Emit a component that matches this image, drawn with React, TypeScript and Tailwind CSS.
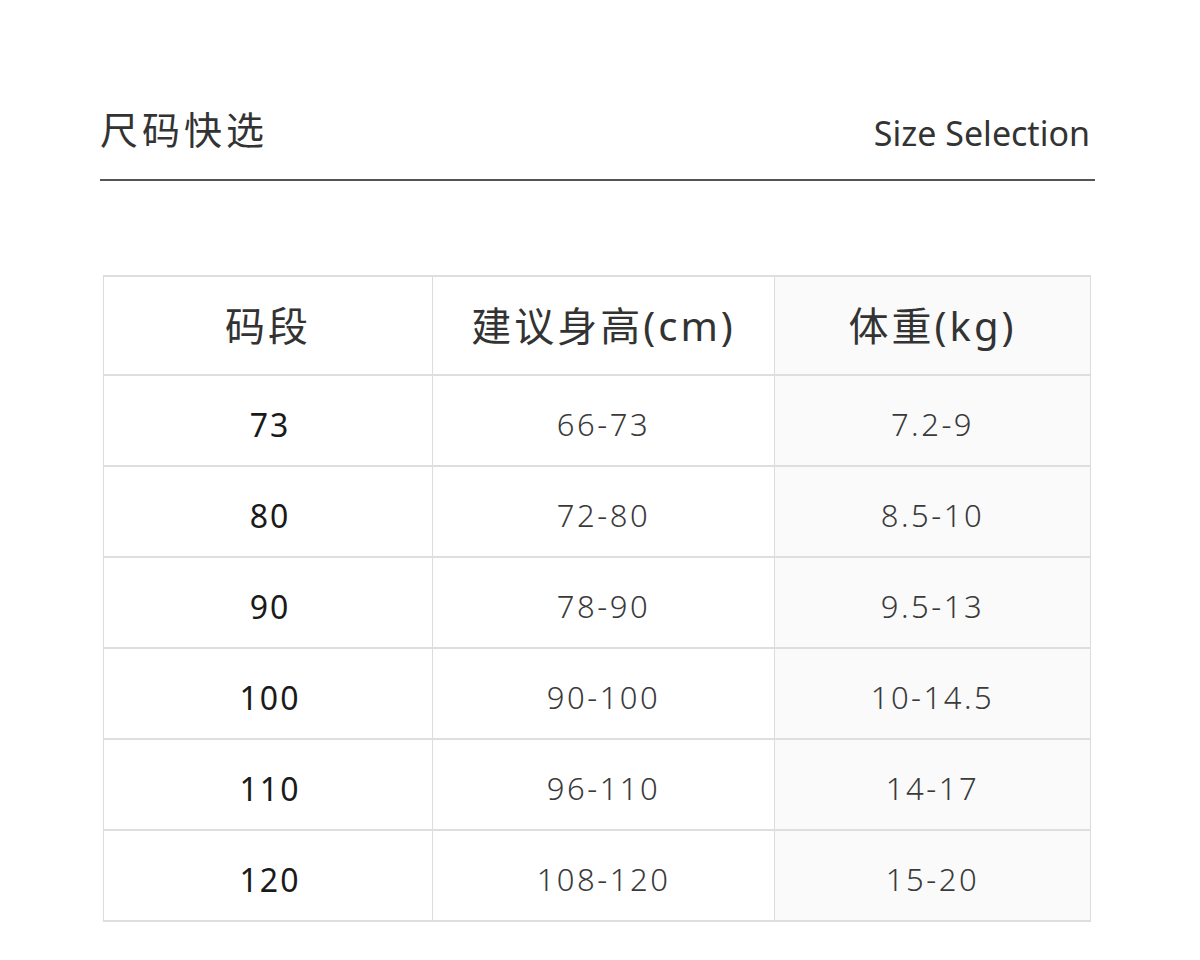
import React from 'react';

const rows = [
  { size: '73', height: '66-73', weight: '7.2-9' },
  { size: '80', height: '72-80', weight: '8.5-10' },
  { size: '90', height: '78-90', weight: '9.5-13' },
  { size: '100', height: '90-100', weight: '10-14.5' },
  { size: '110', height: '96-110', weight: '14-17' },
  { size: '120', height: '108-120', weight: '15-20' },
];

const font = { fontFamily: '"Noto Sans", "Noto Sans CJK SC", sans-serif' };

export default function App() {
  return (
    <div className="w-[1200px] h-[960px] bg-white text-[#333]" style={font}>
      {/* Title bar */}
      <div className="ml-[100px] w-[995px] pt-[105px]">
        <div className="flex items-end justify-between pr-[5px] pb-[25px] border-b-2 border-[#555]">
          <h1 className="text-[38px] leading-[48px] tracking-[4px] text-[#333] mb-[1px]">尺码快选</h1>
          <span className="text-[34px] leading-[42px] text-[#333]">Size Selection</span>
        </div>
      </div>

      {/* Size table */}
      <div className="ml-[103px] mt-[94px] w-[988px] border-l border-r border-[#dcdcdc]">
        <div className="grid grid-cols-[329px_342px_315px] h-[101px] border-t-2 border-b-2 border-[#dedede] text-[40px] tracking-[3px]">
          <div className="flex items-center justify-center border-r border-[#dcdcdc]">码段</div>
          <div className="flex items-center justify-center border-r border-[#dcdcdc]">建议身高(cm)</div>
          <div className="flex items-center justify-center bg-[#fafafa]">体重(kg)</div>
        </div>
        {rows.map((r) => (
          <div key={r.size} className="grid grid-cols-[329px_342px_315px] h-[91px] border-b-2 border-[#dedede] text-[31px]">
            <div className="flex items-center justify-center pt-[8px] pl-[4px] border-r border-[#dcdcdc] text-[32px] font-normal tracking-[2px] text-[#1a1a1a]">{r.size}</div>
            <div className="flex items-center justify-center pt-[8px] border-r border-[#dcdcdc] font-light tracking-[2.5px] text-[#3a3a3a]">{r.height}</div>
            <div className="flex items-center justify-center pt-[8px] bg-[#fafafa] font-light tracking-[2.5px] text-[#3a3a3a]">{r.weight}</div>
          </div>
        ))}
      </div>
    </div>
  );
}
